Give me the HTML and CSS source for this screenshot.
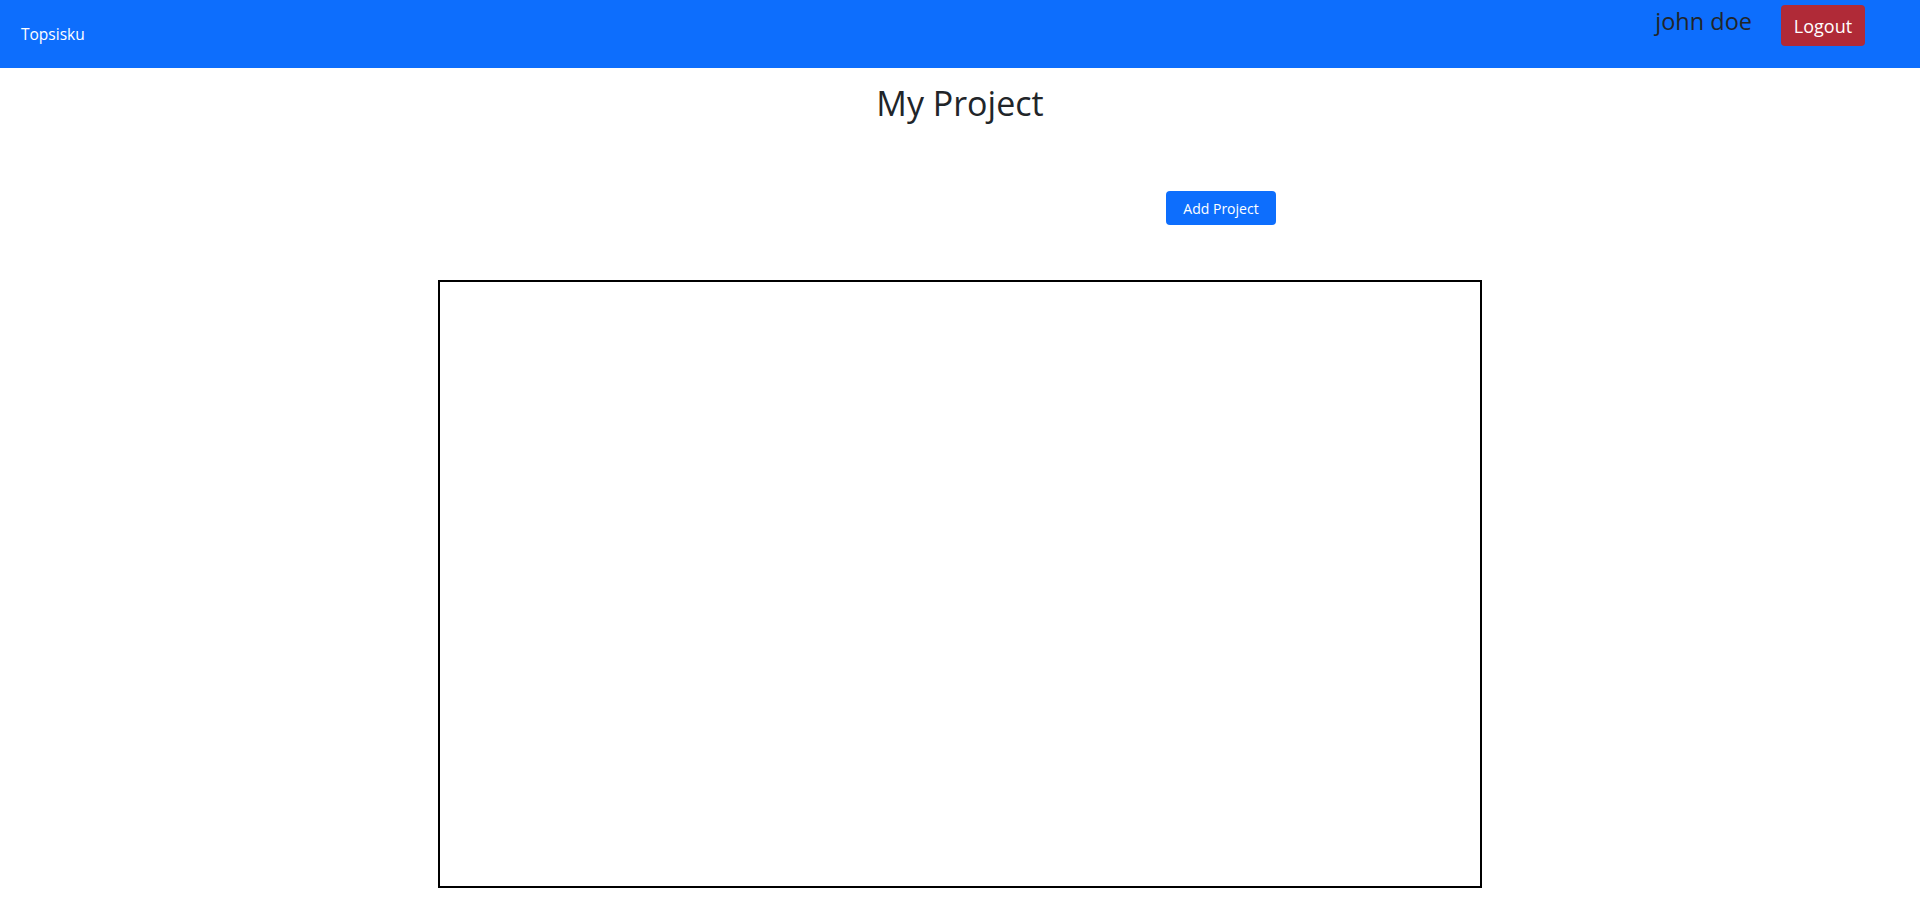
FILE: index.html
```html
<!DOCTYPE html>
<html lang="en">
<head>
<meta charset="utf-8">
<title>Topsisku</title>
<link rel="stylesheet" href="styles.css">
</head>
<body>
<nav class="navbar">
  <a class="brand" href="#">Topsisku</a>
  <div class="user-area">
    <span class="username">john doe</span>
    <button class="btn-logout">Logout</button>
  </div>
</nav>
<main class="page">
  <h1 class="title">My Project</h1>
  <div class="actions">
    <button class="btn-add">Add Project</button>
  </div>
  <div class="project-box"></div>
</main>
</body>
</html>
```
FILE: styles.css
```css
* { box-sizing: border-box; }
html, body { margin: 0; padding: 0; }
body {
  font-family: "Open Sans", "Noto Sans", sans-serif;
  color: #212529;
  background: #fff;
}
.navbar {
  height: 68px;
  background: #0d6efd;
  display: flex;
  justify-content: space-between;
  align-items: flex-start;
  padding: 0 55px 0 21px;
}
.brand {
  align-self: center;
  color: #fff;
  text-decoration: none;
  font-size: 15.5px;
  line-height: 24px;
}
.user-area {
  display: flex;
  align-items: flex-start;
  gap: 29px;
  padding-top: 5px;
}
.username {
  font-size: 23.5px;
  line-height: 24px;
  color: #212529;
  margin-top: 4px;
}
.btn-logout {
  font-family: inherit;
  width: 84px;
  height: 41px;
  border: 0;
  border-radius: 4px;
  background: #b02a37;
  color: #fff;
  font-size: 18px;
  padding: 0;
}
.page {
  display: flex;
  flex-direction: column;
  align-items: center;
}
.title {
  margin: 15px 0 0;
  font-size: 34px;
  font-weight: 400;
  line-height: 41px;
}
.actions {
  width: 1044px;
  margin-top: 67px;
  padding-left: 728px;
}
.btn-add {
  font-family: inherit;
  width: 110px;
  height: 34px;
  border: 0;
  border-radius: 4px;
  background: #0d6efd;
  color: #fff;
  font-size: 14px;
  padding: 0;
}
.project-box {
  width: 1044px;
  height: 608px;
  margin-top: 55px;
  border: 2px solid #000;
}
```
